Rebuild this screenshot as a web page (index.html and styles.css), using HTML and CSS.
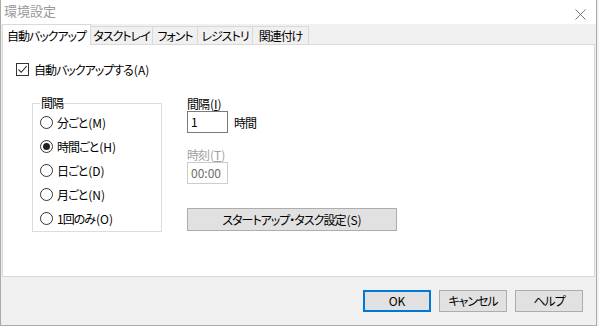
FILE: index.html
```html
<!DOCTYPE html>
<html lang="ja">
<head>
  <meta charset="UTF-8">
  <title>環境設定</title>
  <link rel="stylesheet" href="styles.css">
</head>
<body>
  <div class="window">
    <div class="titlebar">
      <span class="title">環境設定</span>
      <svg class="close" width="11" height="11" viewBox="0 0 11 11">
        <path d="M0.5 0.5 L10.5 10.5 M10.5 0.5 L0.5 10.5" stroke="#777" stroke-width="1" fill="none"/>
      </svg>
    </div>

    <div class="tabs">
      <div class="tab active t1">自動バックアップ</div>
      <div class="tab t2">タスクトレイ</div>
      <div class="tab t3">フォント</div>
      <div class="tab t4">レジストリ</div>
      <div class="tab t5">関連付け</div>
    </div>

    <div class="panel">
      <div class="check">
        <span class="box">
          <svg width="11" height="11" viewBox="0 0 11 11">
            <path d="M1.5 5.5 L4.2 8.3 L9.6 2.2" stroke="#333" stroke-width="1.1" fill="none"/>
          </svg>
        </span>
        自動バックアップする<span class="key">(A)</span>
      </div>

      <div class="content">
        <fieldset class="group">
          <legend>間隔</legend>
          <div class="radio"><span class="circle"></span>分ごと<span class="key">(M)</span></div>
          <div class="radio"><span class="circle on"></span>時間ごと<span class="key">(H)</span></div>
          <div class="radio"><span class="circle"></span>日ごと<span class="key">(D)</span></div>
          <div class="radio"><span class="circle"></span>月ごと<span class="key">(N)</span></div>
          <div class="radio"><span class="circle"></span>1回のみ<span class="key">(O)</span></div>
        </fieldset>

        <div class="side">
          <div class="lbl">間隔<span class="key">(<u>I</u>)</span></div>
          <div class="row">
            <div class="field">1</div>
            <span class="unit">時間</span>
          </div>
          <div class="lbl disabled gap">時刻<span class="key">(<u>T</u>)</span></div>
          <div class="field disabled">00:00</div>
          <button class="btn wide">スタートアップ・タスク設定<span class="key">(S)</span></button>
        </div>
      </div>
    </div>

    <div class="footer">
      <button class="btn default">OK</button>
      <button class="btn">キャンセル</button>
      <button class="btn">ヘルプ</button>
    </div>
  </div>
</body>
</html>
```

FILE: styles.css
```css
body {
  margin: 0;
  background: #f3f3f3;
  font-family: "Noto Sans CJK JP", "Noto Sans", sans-serif;
  font-feature-settings: "palt";
  font-size: 12px;
  letter-spacing: -1px;
  color: #000;
}

.key {
  letter-spacing: 0;
  margin-left: 1px;
}

.window {
  width: 597px;
  height: 326px;
  box-sizing: border-box;
  background: #f0f0f0;
  border-left: 1px solid #aaa;
  border-right: 1px solid #aaa;
  border-bottom: 1px solid #aaa;
  display: flex;
  flex-direction: column;
}

.titlebar {
  height: 24px;
  background: #fff;
  display: flex;
  align-items: flex-start;
  justify-content: space-between;
  padding: 3px 10px 0 3px;
  box-sizing: border-box;
}

.title {
  color: #999;
  font-size: 13px;
  line-height: 15px;
  letter-spacing: 0;
}

.close {
  margin-top: 6px;
}

/* tabs */
.tabs {
  display: flex;
  align-items: flex-end;
  height: 20px;
  margin-left: 1px;
  position: relative;
  z-index: 1;
}

.tab {
  height: 18px;
  line-height: 17px;
  text-align: center;
  border: 1px solid #d9d9d9;
  border-bottom: none;
  margin-left: -1px;
  box-sizing: border-box;
  background: #f0f0f0;
  white-space: nowrap;
}

.tab.active {
  height: 21px;
  margin-bottom: -1px;
  margin-left: 0;
  padding-top: 2px;
  background: #fff;
}

.t1 { width: 89px; }
.t2 { width: 63px; }
.t3 { width: 46px; }
.t4 { width: 56px; }
.t5 { width: 57px; }

.panel {
  height: 233px;
  box-sizing: border-box;
  margin: 0 1px;
  background: #fff;
  border: 1px solid #d9d9d9;
  padding: 17px 0 0 13px;
}

/* checkbox */
.check {
  display: flex;
  align-items: center;
  height: 15px;
  line-height: 15px;
}

.box {
  width: 13px;
  height: 13px;
  box-sizing: border-box;
  border: 1px solid #333;
  margin-right: 5px;
  display: flex;
  align-items: center;
  justify-content: center;
}

.content {
  display: flex;
  margin-top: 19px;
}

/* group box */
.group {
  margin: 0 0 0 16px;
  width: 130px;
  height: 136px;
  box-sizing: border-box;
  border: 1px solid #dcdcdc;
  padding: 0 0 1px 7px;
}

.group legend {
  padding: 0 1px;
  line-height: 14px;
}

.radio {
  height: 24px;
  display: flex;
  align-items: center;
}

.circle {
  width: 13px;
  height: 13px;
  box-sizing: border-box;
  border: 1px solid #333;
  border-radius: 50%;
  margin-right: 4px;
  display: flex;
  align-items: center;
  justify-content: center;
}

.circle.on::after {
  content: "";
  width: 7px;
  height: 7px;
  border-radius: 50%;
  background: #222;
}

/* right column */
.side {
  margin-left: 25px;
  display: flex;
  flex-direction: column;
  align-items: flex-start;
}

.lbl {
  line-height: 14px;
  margin-top: 1px;
}

.lbl.gap {
  margin-top: 15px;
}

.disabled {
  color: #a0a0a0;
}

.row {
  display: flex;
  align-items: center;
}

.field {
  width: 41px;
  height: 22px;
  box-sizing: border-box;
  border: 1px solid #7a7a7a;
  padding: 0 3px;
  line-height: 20px;
  letter-spacing: 0;
  background: #fff;
}

.field.disabled {
  border-color: #ccc;
  color: #6d6d6d;
}

.unit {
  margin-left: 6px;
}

/* buttons */
.btn {
  font-family: inherit;
  font-feature-settings: "palt";
  font-size: 12px;
  letter-spacing: -1px;
  height: 22px;
  width: 68px;
  padding: 0;
  background: #e1e1e1;
  border: 1px solid #adadad;
  color: #000;
  line-height: 18px;
}

.btn.wide {
  width: 210px;
  height: 23px;
  margin-top: 24px;
}

.btn.default {
  border-color: #0078d7;
  box-shadow: inset 0 0 0 1px #0078d7;
  letter-spacing: 0;
}

.footer {
  display: flex;
  justify-content: flex-end;
  gap: 8px;
  padding: 13px 13px 0 0;
}
```
